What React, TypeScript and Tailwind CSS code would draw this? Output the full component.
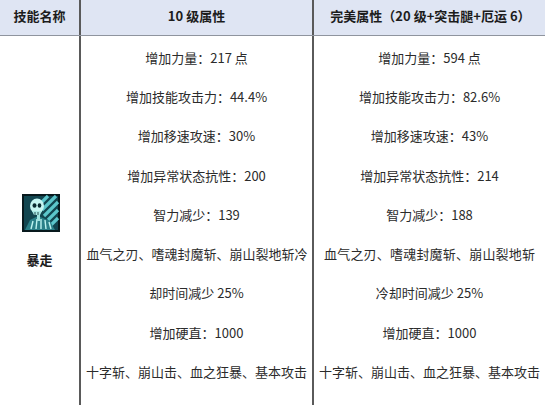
const font = {
  fontFamily: '"Noto Sans CJK SC", "Microsoft YaHei", "Liberation Sans", sans-serif',
};

const level10 = [
  '增加力量：217 点',
  '增加技能攻击力：44.4%',
  '增加移速攻速：30%',
  '增加异常状态抗性：200',
  '智力减少：139',
  '血气之刃、嗜魂封魔斩、崩山裂地斩冷',
  '却时间减少 25%',
  '增加硬直：1000',
  '十字斩、崩山击、血之狂暴、基本攻击',
];

const perfect = [
  '增加力量：594 点',
  '增加技能攻击力：82.6%',
  '增加移速攻速：43%',
  '增加异常状态抗性：214',
  '智力减少：188',
  '血气之刃、嗜魂封魔斩、崩山裂地斩',
  '冷却时间减少 25%',
  '增加硬直：1000',
  '十字斩、崩山击、血之狂暴、基本攻击',
];

function SkillIcon() {
  return (
    <svg width="38" height="38" viewBox="0 0 38 38">
      <rect x="0" y="0" width="38" height="38" fill="#08191d" />
      <rect x="2" y="2" width="34" height="34" fill="#124650" />
      {/* diagonal stripes */}
      <g stroke="#5cc6cb" strokeWidth="3.2">
        <line x1="20" y1="16" x2="34" y2="2" />
        <line x1="22" y1="22" x2="36" y2="8" />
        <line x1="26" y1="26" x2="36" y2="16" />
        <line x1="28" y1="32" x2="36" y2="24" />
        <line x1="18" y1="10" x2="26" y2="2" />
      </g>
      {/* body / ribs */}
      <path d="M3 36 L8 26 L16 22 L28 27 L33 36 Z" fill="#2a8088" />
      <g stroke="#bdf3ef" strokeWidth="1.4">
        <line x1="11" y1="27" x2="9" y2="35" />
        <line x1="15" y1="25" x2="14" y2="35" />
        <line x1="19" y1="25" x2="19" y2="35" />
        <line x1="23" y1="26" x2="24" y2="35" />
        <line x1="27" y1="28" x2="29" y2="35" />
      </g>
      <rect x="15" y="18" width="3" height="9" fill="#9de2df" />
      {/* skull */}
      <ellipse cx="15" cy="12" rx="7" ry="7.5" fill="#c6f6f2" />
      <ellipse cx="12.5" cy="11.5" rx="2" ry="2.3" fill="#0a2a30" />
      <ellipse cx="17.5" cy="11.5" rx="1.8" ry="2.2" fill="#0a2a30" />
      <path d="M10 17 L20 17 L18 21 L12 21 Z" fill="#a8e9e5" />
      <line x1="13" y1="18" x2="13" y2="21" stroke="#0a2a30" strokeWidth="0.8" />
      <line x1="16" y1="18" x2="16" y2="21" stroke="#0a2a30" strokeWidth="0.8" />
    </svg>
  );
}

function Cell({ text, fit }: { text: string; fit?: string }) {
  return (
    <div className="flex h-[39.25px] items-center justify-center whitespace-nowrap">
      {fit ? (
        <span className={`block text-justify [text-align-last:justify] ${fit}`}>{text}</span>
      ) : (
        <span>{text}</span>
      )}
    </div>
  );
}

export default function App() {
  return (
    <div className="h-[410px] w-[545px] overflow-hidden bg-white text-[13px] text-[#2b2b2b]" style={font}>
      <div className="flex h-[36px] border-b border-[#8f949e] bg-[#dfe5f3] font-bold text-[#1c1c1c]">
        <div className="flex w-[81px] shrink-0 items-center justify-center border-r-2 border-[#5a5a5a] pb-[3px]">
          技能名称
        </div>
        <div className="flex w-[233px] shrink-0 items-center justify-center border-r-2 border-[#5a5a5a] pb-[3px]">
          10 级属性
        </div>
        <div className="flex min-w-0 flex-1 items-center justify-center whitespace-nowrap pb-[3px] pl-[2px]">
          完美属性（20 级+突击腿+厄运 6）
        </div>
      </div>

      <div className="flex h-[369px]">
        <div className="flex w-[81px] shrink-0 flex-col items-center border-r-2 border-[#5a5a5a] pt-[158px]">
          <div className="ml-[3px]">
            <SkillIcon />
          </div>
          <div className="mt-[18px] font-bold text-[#1c1c1c]">暴走</div>
        </div>
        <div className="w-[233px] min-w-0 shrink-0 border-r-2 border-[#5a5a5a] pt-[2px]">
          {level10.map((t, i) => (
            <Cell key={i} text={t} fit={i === 5 ? 'w-[220px]' : undefined} />
          ))}
        </div>
        <div className="min-w-0 flex-1 pt-[2px]">
          {perfect.map((t, i) => (
            <Cell key={i} text={t} fit={i === 5 ? 'w-[211px]' : undefined} />
          ))}
        </div>
      </div>
    </div>
  );
}
